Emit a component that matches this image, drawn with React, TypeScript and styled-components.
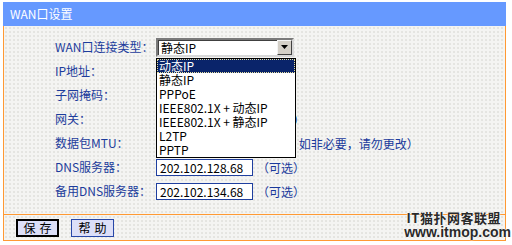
import React from 'react';
import styled, { createGlobalStyle } from 'styled-components';

const GlobalStyle = createGlobalStyle`
    body {
        margin: 0;
        background: #ffffff;
        font-family: "Noto Sans CJK SC", "Liberation Sans", sans-serif;
        font-size: 12px;
    }
`

const StyledPanel = styled.div`
    position: relative;
    margin: 2px 0 0 3px;
    width: 503px;
`

const StyledHeader = styled.div`
    height: 24px;
    line-height: 24px;
    padding-left: 7px;
    background: #6699ff;
    color: #ffffff;
    font-size: 12px;
`

const StyledBody = styled.div`
    box-sizing: border-box;
    padding: 9px 0 11px 51px;
    border-left: 1px solid #ff9933;
    border-right: 1px solid #ff9933;
    border-bottom: 1px solid #ff9933;
    background-color: #f4f4f2;
    background-image: radial-gradient(#e4e4e0 0.7px, transparent 0.9px);
    background-size: 4px 4px;
`

const StyledRow = styled.div`
    display: flex;
    align-items: center;
    height: 24px;
`

const StyledLabel = styled.div`
    width: 101px;
    color: #1c3c9c;
    line-height: 14px;
    white-space: nowrap;
`

const StyledTextBox = styled.div<{ $width?: number }>`
    box-sizing: border-box;
    width: ${p => p.$width ?? 97}px;
    height: 17px;
    padding-left: 3px;
    line-height: 15px;
    border: 1px solid #1f3f9f;
    background: #ffffff;
    color: #000000;
`

const StyledNote = styled.span`
    margin-left: 4px;
    color: #1a3a9c;
    white-space: nowrap;
`

const StyledSelectWrap = styled.div`
    position: relative;
`

const StyledSelectBox = styled.div`
    box-sizing: border-box;
    display: flex;
    align-items: center;
    justify-content: space-between;
    width: 138px;
    height: 19px;
    border: 2px solid;
    border-color: #7a7a7a #d8d8d8 #d8d8d8 #7a7a7a;
    box-shadow: inset 1px 1px 0 #404040;
    background: #ffffff;
    padding-left: 3px;
    color: #000000;
`

const StyledArrowButton = styled.div`
    box-sizing: border-box;
    display: flex;
    align-items: center;
    justify-content: center;
    width: 15px;
    height: 15px;
    background: #d4d0c8;
    border: 1px solid;
    border-color: #f4f4f4 #404040 #404040 #f4f4f4;
`

const StyledDropList = styled.div`
    position: absolute;
    top: 20px;
    left: 0;
    z-index: 2;
    box-sizing: border-box;
    width: 140px;
    border: 1px solid #000000;
    background: #ffffff;
`

const StyledOption = styled.div<{ $active?: boolean }>`
    height: 14px;
    line-height: 14px;
    padding-left: 2px;
    white-space: nowrap;
    color: ${p => p.$active ? '#ffffff' : '#000000'};
    background: ${p => p.$active ? '#0a246a' : 'transparent'};
    outline: ${p => p.$active ? '1px dotted #e8e0a0' : 'none'};
    outline-offset: -1px;
`

const StyledFooter = styled.div`
    display: flex;
    align-items: center;
    gap: 12px;
    height: 25px;
    padding-left: 12px;
    border-left: 1px solid #ff9933;
    border-right: 1px solid #ff9933;
    border-bottom: 1px solid #ff9933;
    background-color: #f4f4f2;
    background-image: radial-gradient(#e4e4e0 0.7px, transparent 0.9px);
    background-size: 4px 4px;
`

const StyledButton = styled.button<{ $focused?: boolean }>`
    box-sizing: border-box;
    width: 43px;
    height: 18px;
    padding: 0;
    font-family: inherit;
    font-size: 12px;
    line-height: 14px;
    letter-spacing: 4px;
    text-indent: 4px;
    color: #000000;
    background: #dcdff8;
    border: ${p => p.$focused ? '2px solid #000000' : '1px solid #2848a8'};
`

const StyledWatermark = styled.div`
    position: absolute;
    right: -5px;
    bottom: 2px;
    text-align: right;
    color: #2a2a2a;
    font-weight: bold;
    text-shadow: 0 0 2px #ffffff, 0 0 1px #ffffff;
    line-height: 14px;
`

const StyledMarkTitle = styled.div`
    font-size: 13px;
    padding-right: 10px;
    letter-spacing: 0.5px;
`

const StyledMarkUrl = styled.div`
    font-family: "Liberation Sans", Arial, sans-serif;
    font-size: 14px;
`

const connectionTypes = ['动态IP', '静态IP', 'PPPoE', 'IEEE802.1X + 动态IP', 'IEEE802.1X + 静态IP', 'L2TP', 'PPTP']

const App = () => {
    return (
        <StyledPanel>
            <GlobalStyle />
            <StyledHeader>WAN口设置</StyledHeader>
            <StyledBody>
                <StyledRow>
                    <StyledLabel>WAN口连接类型：</StyledLabel>
                    <StyledSelectWrap>
                        <StyledSelectBox>
                            <span>静态IP</span>
                            <StyledArrowButton>
                                <svg width="7" height="4" viewBox="0 0 7 4">
                                    <path d="M0 0h7L3.5 4z" fill="#000" />
                                </svg>
                            </StyledArrowButton>
                        </StyledSelectBox>
                        <StyledDropList>
                            {connectionTypes.map((t, i) => (
                                <StyledOption key={t} $active={i === 0}>{t}</StyledOption>
                            ))}
                        </StyledDropList>
                    </StyledSelectWrap>
                </StyledRow>
                <StyledRow>
                    <StyledLabel>IP地址：</StyledLabel>
                    <StyledTextBox />
                </StyledRow>
                <StyledRow>
                    <StyledLabel>子网掩码：</StyledLabel>
                    <StyledTextBox />
                </StyledRow>
                <StyledRow>
                    <StyledLabel>网关：</StyledLabel>
                    <StyledTextBox />
                    <StyledNote>（可选）</StyledNote>
                </StyledRow>
                <StyledRow>
                    <StyledLabel>数据包MTU：</StyledLabel>
                    <StyledTextBox $width={52} />
                    <StyledNote>（默认是1500，如非必要，请勿更改）</StyledNote>
                </StyledRow>
                <StyledRow>
                    <StyledLabel>DNS服务器：</StyledLabel>
                    <StyledTextBox>202.102.128.68</StyledTextBox>
                    <StyledNote>（可选）</StyledNote>
                </StyledRow>
                <StyledRow>
                    <StyledLabel>备用DNS服务器：</StyledLabel>
                    <StyledTextBox>202.102.134.68</StyledTextBox>
                    <StyledNote>（可选）</StyledNote>
                </StyledRow>
            </StyledBody>
            <StyledFooter>
                <StyledButton $focused>保存</StyledButton>
                <StyledButton>帮助</StyledButton>
            </StyledFooter>
            <StyledWatermark>
                <StyledMarkTitle>IT猫扑网客联盟</StyledMarkTitle>
                <StyledMarkUrl>www.itmop.com</StyledMarkUrl>
            </StyledWatermark>
        </StyledPanel>
    );
};

export default App;
